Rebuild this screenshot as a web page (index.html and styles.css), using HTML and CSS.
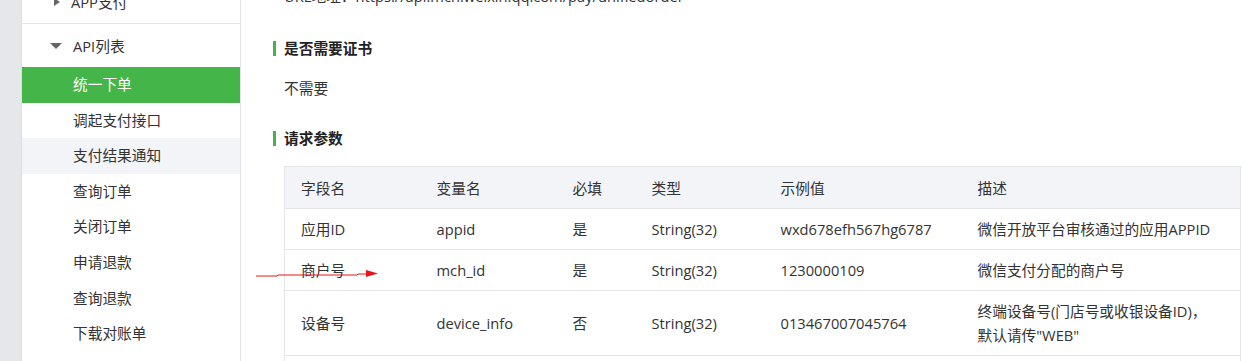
FILE: index.html
```html
<!DOCTYPE html>
<html lang="zh-CN">
<head>
<meta charset="utf-8">
<title>统一下单</title>
<link rel="stylesheet" href="styles.css">
</head>
<body>
<div class="page">
  <div class="strip"></div>
  <nav class="sidebar">
    <div class="group-head collapsed"><span class="tri tri-right"></span>APP支付</div>
    <div class="group-head open"><span class="tri tri-down"></span>API列表</div>
    <ul class="menu">
      <li class="item active">统一下单</li>
      <li class="item">调起支付接口</li>
      <li class="item hover">支付结果通知</li>
      <li class="item">查询订单</li>
      <li class="item">关闭订单</li>
      <li class="item">申请退款</li>
      <li class="item">查询退款</li>
      <li class="item">下载对账单</li>
    </ul>
  </nav>
  <main class="content">
    <p class="text url">URL地址：https://api.mch.weixin.qq.com/pay/unifiedorder</p>
    <h3 class="section-title first">是否需要证书</h3>
    <p class="text">不需要</p>
    <h3 class="section-title">请求参数</h3>
    <table class="params">
      <colgroup>
        <col class="c1"><col class="c2"><col class="c3"><col class="c4"><col class="c5"><col class="c6">
      </colgroup>
      <thead>
        <tr><th>字段名</th><th>变量名</th><th>必填</th><th>类型</th><th>示例值</th><th>描述</th></tr>
      </thead>
      <tbody>
        <tr><td>应用ID</td><td>appid</td><td>是</td><td>String(32)</td><td>wxd678efh567hg6787</td><td>微信开放平台审核通过的应用APPID</td></tr>
        <tr><td>商户号</td><td>mch_id</td><td>是</td><td>String(32)</td><td>1230000109</td><td>微信支付分配的商户号</td></tr>
        <tr><td>设备号</td><td>device_info</td><td>否</td><td>String(32)</td><td>013467007045764</td><td>终端设备号(门店号或收银设备ID)，<br>默认请传"WEB"</td></tr>
        <tr class="cut"><td></td><td></td><td></td><td></td><td></td><td></td></tr>
      </tbody>
    </table>
  </main>
</div>
<svg class="arrow" width="130" height="12" viewBox="0 0 130 12">
  <polyline points="0,9 21,9 22,8 101,8 102,7 112,7" fill="none" stroke="#e8141b" stroke-width="1"/>
  <polygon points="110,3 122,6.5 110,10" fill="#e8141b"/>
</svg>
</body>
</html>
```
FILE: styles.css
```css
html, body {
  margin: 0;
  padding: 0;
  background: #ffffff;
}
body {
  font-family: "Open Sans", "Noto Sans CJK SC", sans-serif;
  font-size: 14.7px;
  color: #333333;
  overflow: hidden;
  height: 361px;
  position: relative;
}
.page {
  display: flex;
  align-items: flex-start;
  height: 361px;
}
.strip {
  width: 21px;
  flex: 0 0 21px;
  height: 100%;
  background: #e6e7eb;
  border-right: 1px solid #dedfe3;
}
.sidebar {
  width: 218px;
  flex: 0 0 218px;
  height: 400px;
  margin-top: -20px;
  border-right: 1px solid #e4e5e8;
  background: #ffffff;
}
.group-head {
  display: flex;
  align-items: center;
  height: 43px;
  line-height: 24px;
}
.group-head.collapsed {
  padding-left: 32px;
  border-bottom: 1px solid #e6e6e9;
}
.group-head.open {
  padding-left: 28px;
}
.tri {
  display: inline-block;
  width: 0;
  height: 0;
}
.tri-right {
  border-top: 4.5px solid transparent;
  border-bottom: 4.5px solid transparent;
  border-left: 6px solid #666666;
  margin-right: 11px;
}
.tri-down {
  border-left: 6px solid transparent;
  border-right: 6px solid transparent;
  border-top: 6px solid #666666;
  margin-right: 11px;
}
.menu {
  list-style: none;
  margin: 0;
  padding: 0;
}
.item {
  height: 35.6px;
  line-height: 35.6px;
  padding-left: 51px;
  color: #333333;
}
.item.active {
  background: #44b549;
  color: #ffffff;
}
.item.hover {
  background: #f3f4f7;
}
.content {
  flex: 1;
  padding-left: 32px;
  margin-top: -16px;
}
.text {
  margin: 0;
  padding-left: 11px;
  line-height: 24px;
}
.url {
  height: 24px;
}
.section-title {
  margin: 26px 0 16px 0;
  display: flex;
  align-items: center;
  gap: 8px;
  font-size: 14.7px;
  font-weight: bold;
  line-height: 24px;
  color: #222222;
}
.section-title.first {
  margin-top: 28px;
}
.section-title::before {
  content: "";
  display: block;
  width: 3px;
  height: 15px;
  background: #44b549;
}
.params {
  margin-left: 11px;
  width: 956px;
  border-collapse: collapse;
  border: 1px solid #e4e5e9;
  table-layout: fixed;
}
.c1 { width: 136px; }
.c2 { width: 136px; }
.c3 { width: 79px; }
.c4 { width: 129px; }
.c5 { width: 197px; }
.c6 { width: 279px; }
.params th,
.params td {
  text-align: left;
  font-weight: normal;
  padding: 8px 16px;
  line-height: 24px;
  border-bottom: 1px solid #e4e5e9;
  vertical-align: middle;
  color: #333333;
  white-space: nowrap;
}
.params th {
  background: #f3f4f8;
  padding-top: 9px;
  padding-bottom: 8px;
}
.params tr.cut td {
  height: 24px;
}
.arrow {
  position: absolute;
  left: 256px;
  top: 267px;
}
```
